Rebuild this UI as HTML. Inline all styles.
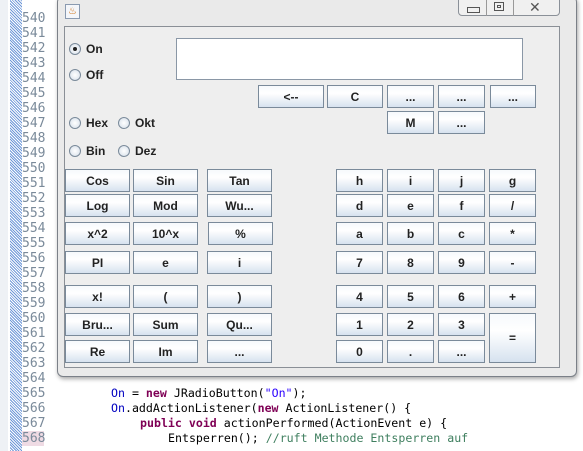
<!DOCTYPE html><html><head><style>
body{margin:0;width:583px;height:451px;overflow:hidden;background:#fff;position:relative;font-family:"Liberation Sans",sans-serif}
.a{position:absolute}
.ln{position:absolute;left:22px;font:13px "DejaVu Sans Mono",monospace;color:#7a8a9a}
.b{position:absolute;box-sizing:border-box;border:1px solid #7a8a9a;background:linear-gradient(#f6f9fc,#fff 35%,#d6e2ef);font:bold 12px "Liberation Sans",sans-serif;color:#222;display:flex;align-items:center;justify-content:center}
.r{position:absolute;width:12px;height:12px;border-radius:50%;border:1px solid #7a8a9a;box-sizing:border-box;background:radial-gradient(#fff,#d3dde8)}
.rl{position:absolute;font:bold 12px "Liberation Sans",sans-serif;color:#222}
.code{position:absolute;font:11.6px "DejaVu Sans Mono",monospace;color:#000;white-space:pre}
</style></head><body>
<div class="a" style="left:10px;top:0;width:12px;height:451px;background:repeating-linear-gradient(45deg,#6f98d8 0 1px,#fff 1px 2px)"></div>
<div class="a" style="left:0;top:0;width:8px;height:451px;background:#eef1f5"></div>
<div class="a" style="left:22px;top:431px;width:22px;height:15px;background:#efdbe4"></div>
<div class="ln" style="top:11px">540</div><div class="ln" style="top:26px">541</div><div class="ln" style="top:41px">542</div><div class="ln" style="top:56px">543</div><div class="ln" style="top:71px">544</div><div class="ln" style="top:86px">545</div><div class="ln" style="top:101px">546</div><div class="ln" style="top:116px">547</div><div class="ln" style="top:131px">548</div><div class="ln" style="top:146px">549</div><div class="ln" style="top:161px">550</div><div class="ln" style="top:176px">551</div><div class="ln" style="top:191px">552</div><div class="ln" style="top:206px">553</div><div class="ln" style="top:221px">554</div><div class="ln" style="top:236px">555</div><div class="ln" style="top:251px">556</div><div class="ln" style="top:266px">557</div><div class="ln" style="top:281px">558</div><div class="ln" style="top:296px">559</div><div class="ln" style="top:311px">560</div><div class="ln" style="top:326px">561</div><div class="ln" style="top:341px">562</div><div class="ln" style="top:356px">563</div><div class="ln" style="top:371px">564</div><div class="ln" style="top:386px">565</div><div class="ln" style="top:401px">566</div><div class="ln" style="top:416px">567</div><div class="ln" style="top:431px">568</div>
<div class="code" style="left:111px;top:386px"><span style="color:#0000c0">On</span> = <span style="color:#7f0055;font-weight:bold">new</span> JRadioButton(<span style="color:#2a00ff">"On"</span>);</div>
<div class="code" style="left:111px;top:401px"><span style="color:#0000c0">On</span>.addActionListener(<span style="color:#7f0055;font-weight:bold">new</span> ActionListener() {</div>
<div class="code" style="left:140px;top:416px"><span style="color:#7f0055;font-weight:bold">public void</span> actionPerformed(ActionEvent e) {</div>
<div class="code" style="left:168px;top:431px">Entsperren(); <span style="color:#3f7f5f">//ruft Methode Entsperren auf</span></div>
<div class="a" style="left:57px;top:-4px;width:518px;height:379px;border:1px solid #7b8088;border-radius:6px;background:#eaeaea;box-shadow:1px 2px 4px rgba(0,0,0,.35)"></div>
<div class="a" style="left:65px;top:4px;width:15px;height:15px;border:1px solid #8a9ab0;box-sizing:border-box;background:#f4f6fa;font-size:10px;color:#c60;text-align:center;line-height:13px">♨</div>
<div class="a" style="left:458px;top:-1px;width:102px;height:17px;border:1px solid #8a9098;border-radius:0 0 4px 4px;box-sizing:border-box;background:#f0f0f0"></div>
<div class="a" style="left:486px;top:0;width:1px;height:16px;background:#999"></div>
<div class="a" style="left:513px;top:0;width:1px;height:16px;background:#999"></div>
<div class="a" style="left:467px;top:7px;width:11px;height:4px;border:1px solid #555"></div>
<div class="a" style="left:494px;top:2px;width:10px;height:9px;border:1px solid #555;box-sizing:border-box"></div>
<div class="a" style="left:497px;top:5px;width:4px;height:3px;border:1px solid #555;box-sizing:border-box"></div>
<div class="a" style="left:529px;top:0;font:14px 'DejaVu Sans';color:#555">✕</div>
<div class="a" style="left:64px;top:26px;width:496px;height:342px;border:1px solid #8a8f96;box-sizing:border-box;background:#eeeeee"></div>
<div class="a" style="left:176px;top:38px;width:347px;height:42px;border:1px solid #8a97a6;box-sizing:border-box;background:#fff"></div>
<div class="r" style="left:69px;top:43px"></div><div class="a" style="left:73px;top:47px;width:4px;height:4px;border-radius:50%;background:#222"></div><div class="rl" style="left:86px;top:42px">On</div>
<div class="r" style="left:69px;top:69px"></div><div class="rl" style="left:86px;top:68px">Off</div>
<div class="r" style="left:69px;top:117px"></div><div class="rl" style="left:86px;top:116px">Hex</div>
<div class="r" style="left:118px;top:117px"></div><div class="rl" style="left:135px;top:116px">Okt</div>
<div class="r" style="left:69px;top:145px"></div><div class="rl" style="left:86px;top:144px">Bin</div>
<div class="r" style="left:118px;top:145px"></div><div class="rl" style="left:135px;top:144px">Dez</div>
<div class="b" style="left:258px;top:85px;width:66px;height:23px">&lt;--</div>
<div class="b" style="left:327px;top:85px;width:56px;height:23px">C</div>
<div class="b" style="left:387px;top:85px;width:47px;height:23px">...</div>
<div class="b" style="left:438px;top:85px;width:47px;height:23px">...</div>
<div class="b" style="left:490px;top:85px;width:46px;height:23px">...</div>
<div class="b" style="left:387px;top:111px;width:47px;height:23px">M</div>
<div class="b" style="left:438px;top:111px;width:47px;height:23px">...</div>
<div class="b" style="left:65px;top:169px;width:65px;height:23px">Cos</div><div class="b" style="left:133px;top:169px;width:65px;height:23px">Sin</div><div class="b" style="left:207px;top:169px;width:65px;height:23px">Tan</div>
<div class="b" style="left:65px;top:194px;width:65px;height:23px">Log</div><div class="b" style="left:133px;top:194px;width:65px;height:23px">Mod</div><div class="b" style="left:207px;top:194px;width:65px;height:23px">Wu...</div>
<div class="b" style="left:65px;top:222px;width:65px;height:23px">x^2</div><div class="b" style="left:133px;top:222px;width:65px;height:23px">10^x</div><div class="b" style="left:208px;top:222px;width:65px;height:23px">%</div>
<div class="b" style="left:65px;top:251px;width:65px;height:23px">PI</div><div class="b" style="left:133px;top:251px;width:65px;height:23px">e</div><div class="b" style="left:207px;top:251px;width:65px;height:23px">i</div>
<div class="b" style="left:65px;top:285px;width:65px;height:23px">x!</div><div class="b" style="left:133px;top:285px;width:65px;height:23px">(</div><div class="b" style="left:207px;top:285px;width:65px;height:23px">)</div>
<div class="b" style="left:65px;top:313px;width:65px;height:23px">Bru...</div><div class="b" style="left:133px;top:313px;width:65px;height:23px">Sum</div><div class="b" style="left:207px;top:313px;width:65px;height:23px">Qu...</div>
<div class="b" style="left:65px;top:340px;width:65px;height:23px">Re</div><div class="b" style="left:133px;top:340px;width:65px;height:23px">Im</div><div class="b" style="left:207px;top:340px;width:65px;height:23px">...</div>
<div class="b" style="left:336px;top:169px;width:47px;height:23px">h</div><div class="b" style="left:387px;top:169px;width:47px;height:23px">i</div><div class="b" style="left:438px;top:169px;width:47px;height:23px">j</div><div class="b" style="left:489px;top:169px;width:47px;height:23px">g</div>
<div class="b" style="left:336px;top:194px;width:47px;height:23px">d</div><div class="b" style="left:387px;top:194px;width:47px;height:23px">e</div><div class="b" style="left:438px;top:194px;width:47px;height:23px">f</div><div class="b" style="left:489px;top:194px;width:47px;height:23px">/</div>
<div class="b" style="left:336px;top:222px;width:47px;height:23px">a</div><div class="b" style="left:387px;top:222px;width:47px;height:23px">b</div><div class="b" style="left:438px;top:222px;width:47px;height:23px">c</div><div class="b" style="left:489px;top:222px;width:47px;height:23px">*</div>
<div class="b" style="left:336px;top:251px;width:47px;height:23px">7</div><div class="b" style="left:387px;top:251px;width:47px;height:23px">8</div><div class="b" style="left:438px;top:251px;width:47px;height:23px">9</div><div class="b" style="left:489px;top:251px;width:47px;height:23px">-</div>
<div class="b" style="left:336px;top:285px;width:47px;height:23px">4</div><div class="b" style="left:387px;top:285px;width:47px;height:23px">5</div><div class="b" style="left:438px;top:285px;width:47px;height:23px">6</div><div class="b" style="left:489px;top:285px;width:47px;height:23px">+</div>
<div class="b" style="left:336px;top:313px;width:47px;height:23px">1</div><div class="b" style="left:387px;top:313px;width:47px;height:23px">2</div><div class="b" style="left:438px;top:313px;width:47px;height:23px">3</div><div class="b" style="left:489px;top:313px;width:47px;height:50px">=</div>
<div class="b" style="left:336px;top:340px;width:47px;height:23px">0</div><div class="b" style="left:387px;top:340px;width:47px;height:23px">.</div><div class="b" style="left:438px;top:340px;width:47px;height:23px">...</div>
</body></html>
